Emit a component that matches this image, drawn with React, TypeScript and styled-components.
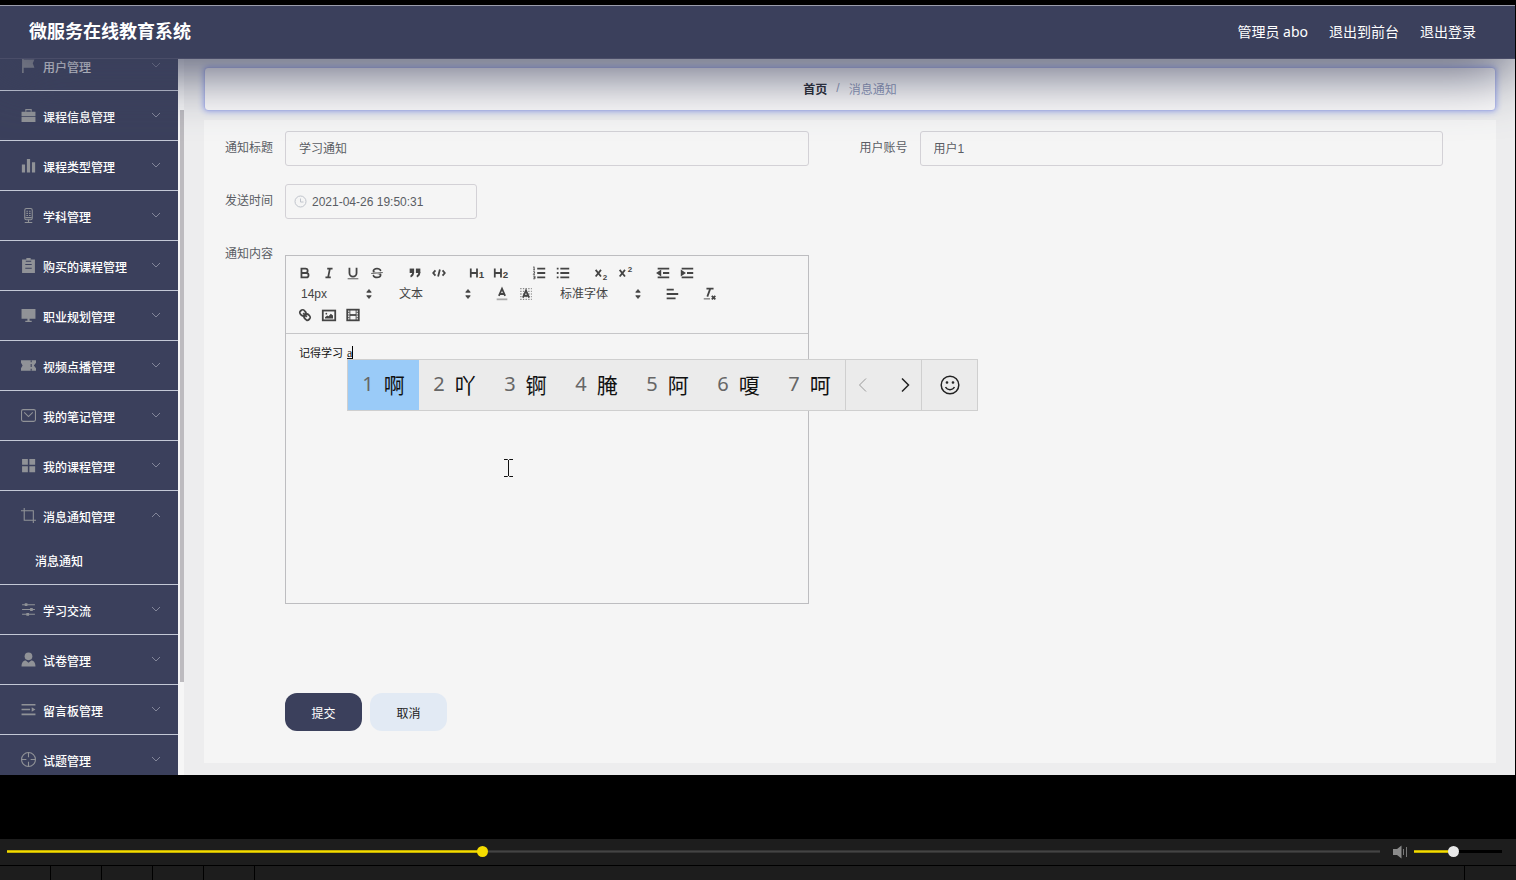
import React, { useState } from "react";
import styled, { createGlobalStyle, css } from "styled-components";

const navy = "#3b405c";
const sans = `"Liberation Sans", "Noto Sans CJK SC", sans-serif`;

const GlobalStyle = createGlobalStyle`
  *, *::before, *::after { box-sizing: border-box; }
  body { margin: 0; background: #000; font-family: ${sans}; font-size: 12px; }
  button, input, select { font: inherit; color: inherit; margin: 0; }
  a { color: inherit; text-decoration: none; }
`;

const Player = styled.div`
  display: flex;
  flex-direction: column;
  height: 100vh;
  min-height: 480px;
`;

const Stage = styled.div`
  flex: 1;
  min-height: 0;
  display: flex;
  padding: 5px 1px 64px 0;
`;

const Frame = styled.div`
  flex: 1;
  min-width: 0;
  display: flex;
  flex-direction: column;
  background: #ededee;
  overflow: hidden;
`;

const Header = styled.header`
  position: relative;
  z-index: 2;
  flex: none;
  height: 54px;
  display: flex;
  align-items: center;
  justify-content: space-between;
  padding: 0 39px 0 29px;
  color: #fff;
  background: ${navy};
  border-top: 1px solid #9b9dac;
  border-bottom: 1px solid #4a4d68;
  box-shadow: 0 10px 60px ${navy};
`;

const Title = styled.h1`
  margin: 0;
  font-size: 18px;
  line-height: 26px;
  font-weight: 700;
`;

const HeaderLinks = styled.div`
  display: flex;
  gap: 21px;
  font: 14px/20px "Noto Sans", "Noto Sans CJK SC", sans-serif;
`;

const Body = styled.div`
  flex: 1;
  min-height: 0;
  display: flex;
`;

const Sidebar = styled.nav`
  flex: none;
  width: 178px;
  overflow: hidden;
  background: ${navy};
  color: #fff;
`;

const Menu = styled.ul`
  list-style: none;
  margin: -18px 0 0;
  padding: 0;
`;

const MenuItem = styled.li`
  border-bottom: 1px solid #c3c8d6;
`;

const MenuButton = styled.button`
  display: flex;
  align-items: center;
  gap: 7px;
  width: 100%;
  height: 49px;
  padding: 0 16px 0 21px;
  border: 0;
  background: none;
  text-align: left;
  font-weight: 500;
`;

const MenuLabel = styled.span`
  flex: 1;
  padding-top: 2px;
`;

const SubLink = styled.a`
  display: block;
  height: 44px;
  padding-left: 35px;
  line-height: 44px;
  font-weight: 500;
`;

const ScrollTrack = styled.div`
  flex: none;
  width: 6px;
  padding: 51px 0 93px 2px;
  background: #f6f6f6;
`;

const ScrollThumb = styled.div`
  height: 100%;
  background: #bdbbbf;
`;

const Main = styled.main`
  flex: 1;
  min-width: 0;
  display: flex;
  flex-direction: column;
  gap: 9px;
  padding: 8px 19px 12px 20px;
`;

const Breadcrumb = styled.nav`
  flex: none;
  display: flex;
  align-items: center;
  justify-content: center;
  gap: 9px;
  height: 44px;
  padding-bottom: 2px;
  border: 1px solid #b4bcec;
  border-radius: 4px;
  background: #fdfcfc;
  box-shadow: 0 0 6px #8f9ff0;
  color: #8c97b8;
`;

const Home = styled.a`
  color: #23262f;
  font-weight: 700;
`;

const Card = styled.form`
  flex: 1;
  display: flex;
  flex-direction: column;
  gap: 18px;
  padding: 11px 2px 0 21px;
  background: #f5f5f5;
  color: #5a5d64;
`;

const Row = styled.div`
  display: grid;
  grid-template-columns: 1fr 1fr;
`;

const Field = styled.div`
  display: flex;
  padding-right: 51px;
`;

const Label = styled.label`
  flex: none;
  width: 60px;
  line-height: 35px;
`;

const inputBox = css`
  height: 35px;
  border: 1px solid #d3d1d6;
  border-radius: 3px;
  background: #f5f5f5;
`;

const TextInput = styled.input`
  ${inputBox}
  flex: 1;
  min-width: 0;
  padding: 0 13px 2px;
`;

const DateBox = styled.div`
  ${inputBox}
  display: flex;
  align-items: center;
  gap: 5px;
  width: 192px;
  padding: 0 8px;
`;

const DateInput = styled.input`
  flex: 1;
  min-width: 0;
  padding: 0;
  border: 0;
  background: none;
`;

const Editor = styled.div`
  flex: 1;
  min-width: 0;
  margin-top: 18px;
  border: 1px solid #bdbdc0;
`;

const Toolbar = styled.div`
  height: 78px;
  padding: 6px 7px;
  border-bottom: 1px solid #c6c6c8;
  color: #444;
`;

const ToolRow = styled.div`
  display: flex;
  gap: 14px;
  height: 21px;
`;

const ToolGroup = styled.div`
  display: flex;
`;

const ToolButton = styled.button`
  display: flex;
  align-items: center;
  justify-content: center;
  width: 24px;
  height: 21px;
  padding: 0;
  border: 0;
  background: none;
`;

const Picker = styled.div<{ $width: number }>`
  display: grid;
  align-items: center;
  justify-items: end;
  width: ${(p) => p.$width}px;
  > * {
    grid-area: 1 / 1;
  }
  svg {
    pointer-events: none;
  }
`;

const PickerSelect = styled.select`
  width: 100%;
  height: 21px;
  padding: 0 8px;
  border: 0;
  appearance: none;
  background: none;
`;

const Paper = styled.div`
  position: relative;
  height: 269px;
`;

const Writing = styled.div`
  height: 100%;
  padding: 11px 13px;
  outline: none;
  color: #111;
  font-size: 11px;
  line-height: 16px;
`;

const Composing = styled.u`
  margin-left: 1px;
  font-family: "Liberation Serif", serif;
  font-size: 12px;
  border-right: 1px solid #000;
`;

const Pointer = styled.svg`
  position: absolute;
  left: 217px;
  top: 124px;
`;

const Ime = styled.div`
  position: absolute;
  z-index: 1;
  left: 61px;
  top: 25px;
  display: flex;
  height: 52px;
  border: 1px solid #cfcfcf;
  background: #ebebeb;
  color: #111;
`;

const Candidate = styled.button<{ $active: boolean }>`
  display: flex;
  align-items: center;
  justify-content: center;
  gap: 10px;
  width: 71px;
  padding: 0 0 2px;
  border: 0;
  background: ${(p) => (p.$active ? "#9acbf8" : "none")};
  font: 21px/30px "Noto Sans CJK SC", sans-serif;
`;

const CandidateKey = styled.span`
  color: #666;
  font-family: "Noto Sans", sans-serif;
  font-size: 20px;
`;

const ImeSection = styled.div`
  display: flex;
  gap: 9px;
  border-left: 1px solid #cfcfcf;
`;

const ImeButton = styled.button<{ $width: number; $dim?: boolean }>`
  display: flex;
  align-items: center;
  justify-content: center;
  width: ${(p) => p.$width}px;
  padding: 0;
  border: 0;
  background: none;
  color: ${(p) => (p.$dim ? "#999" : "#222")};
`;

const Actions = styled.div`
  display: flex;
  gap: 8px;
  margin: 71px 0 0 60px;
`;

const ActionButton = styled.button<{ $primary?: boolean }>`
  width: 77px;
  height: 38px;
  border: 0;
  border-radius: 12px;
  background: ${(p) => (p.$primary ? navy : "#e2eaf4")};
  color: ${(p) => (p.$primary ? "#fff" : "#222")};
`;

const Controls = styled.div`
  flex: none;
  background: #1d1d1d;
`;

const SeekRow = styled.div`
  display: flex;
  align-items: center;
  height: 27px;
  padding: 0 14px 1px 7px;
  border-bottom: 1px solid #000;
`;

const Slider = styled.input<{ $knob: string; $rest: string }>`
  appearance: none;
  height: 11px;
  background: none;
  &::-webkit-slider-runnable-track {
    height: 3px;
    background: linear-gradient(#a89700, #f5dc00, #a89700) 0 0 / var(--played) 100% no-repeat,
      ${(p) => p.$rest};
  }
  &::-webkit-slider-thumb {
    appearance: none;
    width: 11px;
    height: 11px;
    margin-top: -4px;
    border-radius: 50%;
    background: ${(p) => p.$knob};
  }
`;

const SeekSlider = styled(Slider)`
  flex: 1;
  min-width: 0;
  margin-right: 13px;
`;

const VolumeSlider = styled(Slider)`
  width: 88px;
`;

const MuteButton = styled.button`
  display: flex;
  width: 21px;
  padding: 0;
  border: 0;
  background: none;
`;

const ButtonRow = styled.div`
  display: flex;
  height: 14px;
`;

const Slot = styled.div<{ $fill?: boolean }>`
  ${(p) => (p.$fill ? "flex: 1;" : "width: 51px;")}
  border-right: 1px solid #000;
  &:last-child {
    border-right: 0;
  }
`;

/* ---------- sidebar icons, 14 x 14 ---------- */

const menuIcons: Record<string, React.ReactNode> = {
  flag: <path d="M1 0.5h1.500v0.800H12.500L11 5l1.500 4H2.500V14H1z" fill="currentColor" stroke="none" />,
  case: (
    <>
      <path d="M4.5 3.5v-2h5v2" />
      <path d="M0.5 3.5h13v4.200h-13zM0.5 8.500h13V13h-13z" fill="currentColor" stroke="none" />
    </>
  ),
  bars: <path d="M0.8 6h3v7.5h-3zM5.5 1h3v12.5h-3zM10.2 4h3v9.5h-3z" fill="currentColor" stroke="none" />,
  mic: (
    <>
      <rect x="3.5" y="0.5" width="7" height="10.500" rx="1.500" />
      <path d="M5 3h1.500M7.500 3H9M5 5h1.500M7.500 5H9M5 7h1.500M7.500 7H9M7 11v2.500M3.500 13.500h7M4 9h6" />
    </>
  ),
  clipboard: (
    <>
      <path d="M1 1.500H5V0h4v1.500h4V14H1z" fill="currentColor" stroke="none" />
      <path d="M4 6h6M4 9.500h6M4.500 3h5" stroke="#3b405c" />
    </>
  ),
  screen: <path d="M0.500 1h13v9h-13zM6 10h2v2h2v1H4v-1h2z" fill="currentColor" stroke="none" />,
  ticket: (
    <>
      <path d="M0 2h14v2.500l-2 2.500 2 2.500V12H0V9.500L1.500 7 0 4.500z" fill="currentColor" stroke="none" />
      <path d="M9.500 2v2M9.500 5.500v3M9.500 10v2" stroke="#3b405c" />
    </>
  ),
  mail: (
    <>
      <rect x="0.500" y="1.500" width="13" height="11" rx="1.500" />
      <path d="M3 4l4 4 4-4" />
    </>
  ),
  grid: <path d="M1 1h5.400v5.400H1zM7.800 1h5.400v5.400H7.800zM1 7.800h5.400v5.400H1zM7.800 7.800h5.400v5.400H7.800z" fill="currentColor" stroke="none" />,
  crop: <path d="M3 0v11.500h11M0 2.500h11.500V14" />,
  sliders: (
    <>
      <path d="M1 2.500h12M1 7h12M1 11.500h12" />
      <path d="M3.500 1.200h2.500v2.600H3.500zM8.500 5.700H11v2.600H8.500zM5 10.200h2.500v2.600H5z" fill="currentColor" stroke="none" />
    </>
  ),
  user: (
    <>
      <circle cx="7" cy="4" r="3.600" fill="currentColor" stroke="none" />
      <path d="M0.500 13.500c0-4 2-5.500 4-5.500l2.500 2 2.500-2c2 0 4 1.500 4 5.500z" fill="currentColor" stroke="none" />
    </>
  ),
  list: (
    <>
      <path d="M0.500 2.500h13M0.500 7h8M0.500 11.500h13" strokeWidth="1.500" />
      <path d="M10 5l3.500 2-3.500 2z" fill="currentColor" stroke="none" />
    </>
  ),
  target: (
    <>
      <circle cx="7" cy="7" r="6.500" />
      <path d="M7 0.500V5M7 9v4.500M0.500 7H5M9 7h4.500" />
    </>
  ),
};

const MenuIcon = ({ name }: { name: string }) => (
  <svg width="15" height="15" viewBox="0 0 14 14" fill="none" stroke="currentColor" color="#909297" aria-hidden>
    {menuIcons[name]}
  </svg>
);

const Chevron = ({ up }: { up?: boolean }) => (
  <svg width="12" height="8" viewBox="0 0 12 8" fill="none" stroke="#83869a" aria-hidden>
    <path d={up ? "M2 5l4-4 4 4" : "M2 1l4 4 4-4"} />
  </svg>
);

/* ---------- editor icons, 18 x 18 ---------- */

const Solid = ({ d }: { d: string }) => <path d={d} fill="currentColor" stroke="none" />;

const IconText = ({ x, y, size, children }: { x: number; y: number; size: number; children: string }) => (
  <text x={x} y={y} fontSize={size} fontWeight="700" fill="currentColor" stroke="none">
    {children}
  </text>
);

const toolIcons: Record<string, React.ReactNode> = {
  bold: <path d="M5 4h4.500a2.500 2.500 0 0 1 0 5H5zM5 9h5.500a2.500 2.500 0 0 1 0 5H5z" />,
  italic: <path d="M7 4h6M5 14h6M8 14l2-10" />,
  underline: (
    <>
      <path d="M5 3v6a4 4 0 0 0 8 0V3" />
      <path d="M3 15.500h12" strokeWidth="1" />
    </>
  ),
  strike: (
    <>
      <path d="M2.500 9.500l13-1" strokeWidth="1" />
      <Solid d="M9.007,8C6.542,7.791,6,7.519,6,6.5,6,5.792,7.283,5,9,5c1.571,0,2.765.679,2.969,1.309a1,1,0,0,0,1.9-.617C13.356,4.106,11.354,3,9,3,6.2,3,4,4.538,4,6.5a3.2,3.2,0,0,0,.5,1.843Z" />
      <Solid d="M8.984,10C11.457,10.208,12,10.479,12,11.5c0,.708-1.283,1.5-3,1.5-1.571,0-2.765-.679-2.969-1.309a1,1,0,1,0-1.9.617C4.644,13.894,6.646,15,9,15c2.8,0,5-1.538,5-3.5a3.2,3.2,0,0,0-.5-1.843Z" />
    </>
  ),
  quote: (
    <g fill="currentColor">
      <rect x="4" y="5" width="3" height="3" />
      <rect x="11" y="5" width="3" height="3" />
      <path d="M7 8c0 4-3 5-3 5M14 8c0 4-3 5-3 5" />
    </g>
  ),
  code: <path d="M5 6L2.500 9 5 12M13 6l2.500 3-2.500 3M10 5L8 13" />,
  h1: (
    <>
      <path d="M2 4v10M9 4v10M2 9h7" />
      <IconText x={11} y={15} size={11}>1</IconText>
    </>
  ),
  h2: (
    <>
      <path d="M2 4v10M9 4v10M2 9h7" />
      <IconText x={11} y={15} size={11}>2</IconText>
    </>
  ),
  ordered: (
    <>
      <path d="M7 4h9M7 9h9M7 14h9" />
      <path d="M2.500 2.500l1-.5v3.500M2.500 5.500h2M2.500 7.500h1.500v1.500l-1.500 1.500h2M2.500 12.500h2v3h-2M3 14h1.500" strokeWidth="1" />
    </>
  ),
  bullet: <path d="M6 4h10M6 9h10M6 14h10M2 4h2M2 9h2M2 14h2" />,
  sub: (
    <>
      <path d="M3 5.500l6 7.500M9 5.500L3 13" />
      <IconText x={11} y={17} size={9}>2</IconText>
    </>
  ),
  sup: (
    <>
      <path d="M3 5.500l6 7.500M9 5.500L3 13" />
      <IconText x={12} y={8} size={9}>2</IconText>
    </>
  ),
  outdent: (
    <>
      <path d="M3 4h13M3 14h13M9 9h7" />
      <path d="M6 7v4L3 9z" fill="currentColor" />
    </>
  ),
  indent: (
    <>
      <path d="M3 4h13M3 14h13M9 9h7" />
      <path d="M3 7v4l3-2z" fill="currentColor" />
    </>
  ),
  color: (
    <>
      <path d="M5.500 11L9 3l3.500 8M6.500 9h5" />
      <path d="M3 15h12" stroke="#aaa" />
    </>
  ),
  background: (
    <>
      <path d="M2.500 3h13M2.500 6h13M2.500 9h13M2.500 12h13M2.500 15h13" stroke="#888" strokeDasharray="1.500 1.500" strokeWidth="1.500" />
      <path d="M5.500 13L9 5l3.500 8M6.500 11h5" />
    </>
  ),
  align: <path d="M3 4h8M3 9h13M3 14h10" />,
  clean: (
    <>
      <path d="M5 3h8M6 12L9.300 3M11 11l4 4M15 11l-4 4" />
      <path d="M2 14.500h7" strokeWidth="1" />
    </>
  ),
  link: (
    <>
      <path d="M7 7l4 4" />
      <path d="M8.9,4.577a3.476,3.476,0,0,1,.36,4.679A3.476,3.476,0,0,1,4.577,8.9C3.185,7.5,2.035,6.4,4.217,4.217S7.5,3.185,8.9,4.577Z" />
      <path d="M13.423,9.1a3.476,3.476,0,0,0-4.679-.36,3.476,3.476,0,0,0,.36,4.679c1.392,1.392,2.5,2.542,4.679.36S14.815,10.5,13.423,9.1Z" />
    </>
  ),
  image: (
    <>
      <rect x="2" y="4" width="14" height="11" />
      <circle cx="6" cy="7.500" r="1" fill="currentColor" stroke="none" />
      <Solid d="M4.500 13v-1.500l2.500-2 1.500 1L11 7.500l2.500 2V13z" />
    </>
  ),
  video: (
    <>
      <rect x="2.500" y="3" width="13" height="12" />
      <path d="M5.500 3v12M12.500 3v12" strokeWidth="1" />
      <path d="M5.500 9h7" />
      <path d="M3 6h2M3 9h2M3 12h2M13 6h2M13 9h2M13 12h2" strokeWidth="1" />
    </>
  ),
};

const Tools = ({ items }: { items: [string, string][] }) => (
  <ToolGroup>
    {items.map(([icon, label]) => (
      <ToolButton key={icon} type="button" aria-label={label}>
        <svg width="16" height="16" viewBox="0 0 18 18" fill="none" stroke="currentColor" strokeWidth="2">
          {toolIcons[icon]}
        </svg>
      </ToolButton>
    ))}
  </ToolGroup>
);

const ToolPicker = ({ label, value, width }: { label: string; value: string; width: number }) => (
  <Picker $width={width}>
    <PickerSelect aria-label={label} defaultValue={value}>
      <option>{value}</option>
    </PickerSelect>
    <svg width="16" height="16" viewBox="0 0 18 18" fill="currentColor" stroke="currentColor" aria-hidden>
      <path d="M6.500 11h5L9 14zM6.500 7h5L9 4z" />
    </svg>
  </Picker>
);

const menu = [
  { icon: "flag", label: "用户管理" },
  { icon: "case", label: "课程信息管理" },
  { icon: "bars", label: "课程类型管理" },
  { icon: "mic", label: "学科管理" },
  { icon: "clipboard", label: "购买的课程管理" },
  { icon: "screen", label: "职业规划管理" },
  { icon: "ticket", label: "视频点播管理" },
  { icon: "mail", label: "我的笔记管理" },
  { icon: "grid", label: "我的课程管理" },
  { icon: "crop", label: "消息通知管理", child: "消息通知" },
  { icon: "sliders", label: "学习交流" },
  { icon: "user", label: "试卷管理" },
  { icon: "list", label: "留言板管理" },
  { icon: "target", label: "试题管理" },
];

const candidates = ["啊", "吖", "锕", "腌", "阿", "嗄", "呵"];

export default function App() {
  const [time, setTime] = useState(345);
  const [volume, setVolume] = useState(44);

  return (
    <>
      <GlobalStyle />
      <Player>
        <Stage>
          <Frame>
            <Header>
              <Title>微服务在线教育系统</Title>
              <HeaderLinks>
                <span>管理员 abo</span>
                <a href="#front">退出到前台</a>
                <a href="#logout">退出登录</a>
              </HeaderLinks>
            </Header>
            <Body>
              <Sidebar>
                <Menu>
                  {menu.map((item) => (
                    <MenuItem key={item.label}>
                      <MenuButton type="button" aria-expanded={!!item.child}>
                        <MenuIcon name={item.icon} />
                        <MenuLabel>{item.label}</MenuLabel>
                        <Chevron up={!!item.child} />
                      </MenuButton>
                      {item.child && <SubLink href="#notice">{item.child}</SubLink>}
                    </MenuItem>
                  ))}
                </Menu>
              </Sidebar>
              <ScrollTrack>
                <ScrollThumb />
              </ScrollTrack>
              <Main>
                <Breadcrumb>
                  <Home href="#home">首页</Home>
                  <span>/</span>
                  <span>消息通知</span>
                </Breadcrumb>
                <Card onSubmit={(e) => e.preventDefault()}>
                  <Row>
                    <Field>
                      <Label htmlFor="title">通知标题</Label>
                      <TextInput id="title" defaultValue="学习通知" />
                    </Field>
                    <Field>
                      <Label htmlFor="account">用户账号</Label>
                      <TextInput id="account" defaultValue="用户1" />
                    </Field>
                  </Row>
                  <Row>
                    <Field>
                      <Label htmlFor="sent">发送时间</Label>
                      <DateBox>
                        <svg width="13" height="13" viewBox="0 0 13 13" fill="none" stroke="#c0c4cc" aria-hidden>
                          <circle cx="6.500" cy="6.500" r="5.500" />
                          <path d="M6.500 3.500v3.500h3" />
                        </svg>
                        <DateInput id="sent" defaultValue="2021-04-26 19:50:31" />
                      </DateBox>
                    </Field>
                  </Row>
                  <Row>
                    <Field>
                      <Label as="span" id="content-label">通知内容</Label>
                      <Editor>
                        <Toolbar>
                          <ToolRow>
                            <Tools items={[["bold", "粗体"], ["italic", "斜体"], ["underline", "下划线"], ["strike", "删除线"]]} />
                            <Tools items={[["quote", "引用"], ["code", "代码"]]} />
                            <Tools items={[["h1", "标题一"], ["h2", "标题二"]]} />
                            <Tools items={[["ordered", "有序列表"], ["bullet", "无序列表"]]} />
                            <Tools items={[["sub", "下标"], ["sup", "上标"]]} />
                            <Tools items={[["outdent", "减少缩进"], ["indent", "增加缩进"]]} />
                          </ToolRow>
                          <ToolRow>
                            <ToolPicker label="字号" value="14px" width={84} />
                            <ToolPicker label="段落" value="文本" width={85} />
                            <Tools items={[["color", "文字颜色"], ["background", "背景颜色"]]} />
                            <ToolPicker label="字体" value="标准字体" width={94} />
                            <Tools items={[["align", "对齐"]]} />
                            <Tools items={[["clean", "清除格式"]]} />
                          </ToolRow>
                          <ToolRow>
                            <Tools items={[["link", "链接"], ["image", "图片"], ["video", "视频"]]} />
                          </ToolRow>
                        </Toolbar>
                        <Paper>
                          <Writing
                            role="textbox"
                            aria-multiline
                            aria-labelledby="content-label"
                            contentEditable
                            suppressContentEditableWarning
                          >
                            记得学习 <Composing>a</Composing>
                          </Writing>
                          <Pointer width="11" height="20" viewBox="0 0 11 20" fill="none" stroke="#111" aria-hidden>
                            <path d="M1 1.500h3.500l1 1 1-1H10M5.500 2v16M1 18.500h3.500l1-1 1 1H10" />
                          </Pointer>
                          <Ime>
                            {candidates.map((text, i) => (
                              <Candidate key={text} type="button" $active={i === 0}>
                                <CandidateKey>{i + 1}</CandidateKey>
                                {text}
                              </Candidate>
                            ))}
                            <ImeSection>
                              <ImeButton type="button" aria-label="上一页" $width={33} $dim>
                                <svg width="10" height="16" viewBox="0 0 10 16" fill="none" stroke="currentColor">
                                  <path d="M8 1.500L1.500 8 8 14.500" />
                                </svg>
                              </ImeButton>
                              <ImeButton type="button" aria-label="下一页" $width={33}>
                                <svg width="10" height="16" viewBox="0 0 10 16" fill="none" stroke="currentColor" strokeWidth="1.500">
                                  <path d="M2 1.500L8.500 8 2 14.500" />
                                </svg>
                              </ImeButton>
                            </ImeSection>
                            <ImeSection>
                              <ImeButton type="button" aria-label="表情" $width={55}>
                                <svg width="20" height="20" viewBox="0 0 20 20" fill="none" stroke="currentColor" strokeWidth="1.500">
                                  <circle cx="10" cy="10" r="8.800" />
                                  <path d="M5.500 12c2 3.500 7 3.500 9 0" />
                                  <circle cx="7" cy="7.500" r="0.600" fill="currentColor" />
                                  <circle cx="13" cy="7.500" r="0.600" fill="currentColor" />
                                </svg>
                              </ImeButton>
                            </ImeSection>
                          </Ime>
                        </Paper>
                      </Editor>
                    </Field>
                  </Row>
                  <Actions>
                    <ActionButton type="submit" $primary>提交</ActionButton>
                    <ActionButton type="button">取消</ActionButton>
                  </Actions>
                </Card>
              </Main>
            </Body>
          </Frame>
        </Stage>
        <Controls>
          <SeekRow>
            <SeekSlider
              type="range"
              aria-label="播放进度"
              max={1000}
              value={time}
              onChange={(e) => setTime(+e.target.value)}
              $knob="#f5dc00"
              $rest="linear-gradient(#2c2c2c, #444, #2c2c2c)"
              style={{ "--played": `${time / 10}%` } as React.CSSProperties}
            />
            <MuteButton type="button" aria-label="静音">
              <svg width="16" height="14" viewBox="0 0 16 14" fill="none" stroke="#777" aria-hidden>
                <path d="M0 4h4l4.500-3.500v13L4 10H0z" fill="#8a8a8a" stroke="none" />
                <path d="M10.500 4v6M13.500 2v10" />
              </svg>
            </MuteButton>
            <VolumeSlider
              type="range"
              aria-label="音量"
              max={100}
              value={volume}
              onChange={(e) => setVolume(+e.target.value)}
              $knob="#e8e8e8"
              $rest="#000"
              style={{ "--played": `${volume}%` } as React.CSSProperties}
            />
          </SeekRow>
          <ButtonRow>
            <Slot />
            <Slot />
            <Slot />
            <Slot />
            <Slot />
            <Slot $fill />
            <Slot />
          </ButtonRow>
        </Controls>
      </Player>
    </>
  );
}
